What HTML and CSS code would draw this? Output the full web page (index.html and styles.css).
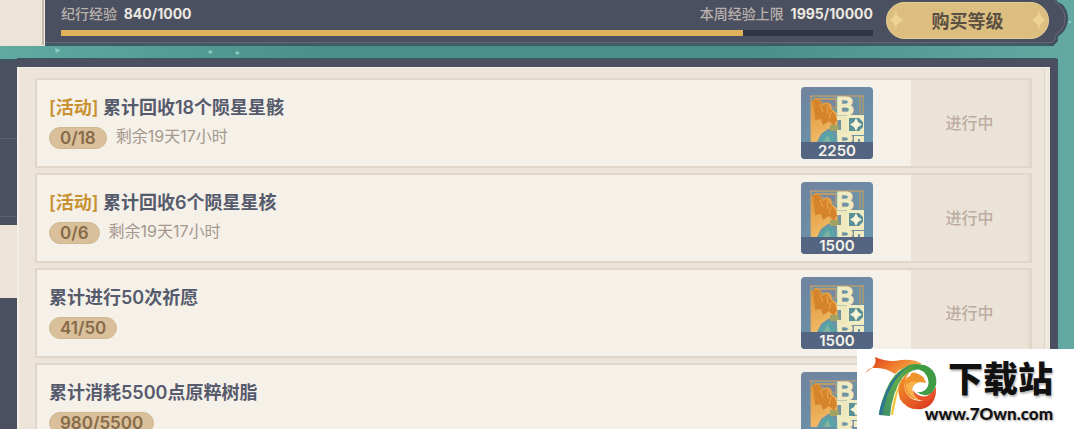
FILE: index.html
```html
<!DOCTYPE html>
<html lang="zh-CN">
<head>
    <meta charset="UTF-8">
    <title>纪行任务</title>
    <link rel="stylesheet" href="styles.css">
</head>
<body>
    <svg class="defs" width="0" height="0" aria-hidden="true">
        <defs>
            <linearGradient id="leaf" x1="0" y1="0" x2="0.3" y2="1">
                <stop offset="0" stop-color="#dd9136"/>
                <stop offset="1" stop-color="#f0bc6a"/>
            </linearGradient>
            <symbol id="bep" viewBox="0 0 72 72">
                <path d="M9 9H63V55H9Z" fill="#6f93a4"/>
                <path d="M13 12H35V22L28 18ZM59 10V27M62 9V27" fill="#7787a0" stroke="#c99a5c" stroke-width="1"/>
                <path d="M9 9H63M10 9V54M14 12H35" fill="none" stroke="#dba258" stroke-width="1"/>
                <path d="M10 15L14 11L18 12L21 17L26 15L30 17L31 22L36 26L37 31L36 40L27 42L20 47L16 55H10Z" fill="url(#leaf)"/>
                <path d="M12 13L18 13L21 19L26 17L29 22L34 27L36 33L33 39L28 34L22 38L20 32L14 33Z" fill="#d5842b"/>
                <path d="M19 18L22 25M26 19L27 27M30 25L28 32M13 34L20 40M13 42L24 40" stroke="#eda94e" stroke-width="1"/>
                <path d="M17 55L23 46L31 44L35 55Z" fill="#58a3a5"/>
                <path d="M22 55L27 48L30 55Z" fill="#7eb3a0"/>
                <path d="M29 38H38V44H29Z" fill="#a1a365"/>
                <path d="M36 29H56V33H46V44H63V48H36V43H40V33H36Z" fill="#eee9bd"/>
                <path d="M46 28H63V47H46Z" fill="#f1ebc2"/>
                <path d="M48 31H58L62 35V40L58 44H48Z" fill="#5b9196"/>
                <path d="M55 31L57 35L61 37.5L57 40L55 44L53 40L49 37.5L53 35Z" fill="#f8f4d8"/>
                <text x="35" y="28" class="art">B</text>
                <text x="35" y="65" class="art">B</text>
                <path d="M53 49H63V55H59V52H57V55H53Z" fill="#f1ebc2"/>
            </symbol>
        </defs>
    </svg>

    <div class="wrap">
        <svg class="stars" width="100%" height="60" aria-hidden="true">
            <path d="M55 48L61 50L56 53ZM210 50L213 52L210 54L208 52ZM237 51L240 53L237 55L235 53Z" fill="#8cc9be"/>
            <circle cx="1070" cy="22" r="1" fill="#a5dcd2"/>
        </svg>

        <div class="top">
            <div class="top-tab"></div>
            <div class="top-bar">
                <div class="exp">
                    <div class="exp-text">
                        <label for="exp">纪行经验 <b>840/1000</b></label>
                        <span>本周经验上限 <b>1995/10000</b></span>
                    </div>
                    <progress id="exp" max="1000" value="840"></progress>
                </div>
                <button class="buy" type="button">
                    <svg width="14" height="24" viewBox="0 0 14 24" aria-hidden="true"><path d="M6 2Q6 8 13 12Q6 16 6 22Q5 15 0 12Q5 9 6 2Z"/></svg>
                    <span>购买等级</span>
                    <svg width="14" height="24" viewBox="0 0 14 24" aria-hidden="true"><path d="M8 2Q8 8 1 12Q8 16 8 22Q9 15 14 12Q9 9 8 2Z"/></svg>
                </button>
            </div>
            <svg class="top-end" width="20" height="46" viewBox="0 0 20 46" aria-hidden="true">
                <path d="M0 0H7Q9 3 13 4Q19 10 19 19Q18 30 11 35Q8 36 9 41L4 46H0Z" fill="#3f4e5f"/>
                <path d="M0 0H5Q7 4 11 6Q16 11 16 19Q16 28 10 32Q5 35 6 40L3 43H0Z" fill="#4b5061"/>
                <path d="M5 0Q7 4 11 6Q16 11 16 19Q16 28 10 32Q5 35 6 40L3 42.5H0" fill="none" stroke="#71677a"/>
            </svg>
        </div>

        <div class="main">
            <div class="side">
                <div class="side-item"></div>
                <div class="side-item"></div>
                <div class="side-space"></div>
                <div class="side-item on"></div>
            </div>
            <ul class="list">
                <li class="task">
                    <div class="info">
                        <h2><em>[活动]</em> 累计回收18个陨星星骸</h2>
                        <p><span class="count">0/18</span><span class="time">剩余19天17小时</span></p>
                    </div>
                    <div class="reward">
                        <svg width="72" height="72" aria-hidden="true"><use href="#bep"/></svg>
                        <span>2250</span>
                    </div>
                    <div class="state">进行中</div>
                </li>
                <li class="task">
                    <div class="info">
                        <h2><em>[活动]</em> 累计回收6个陨星星核</h2>
                        <p><span class="count">0/6</span><span class="time">剩余19天17小时</span></p>
                    </div>
                    <div class="reward">
                        <svg width="72" height="72" aria-hidden="true"><use href="#bep"/></svg>
                        <span>1500</span>
                    </div>
                    <div class="state">进行中</div>
                </li>
                <li class="task">
                    <div class="info">
                        <h2>累计进行50次祈愿</h2>
                        <p><span class="count">41/50</span></p>
                    </div>
                    <div class="reward">
                        <svg width="72" height="72" aria-hidden="true"><use href="#bep"/></svg>
                        <span>1500</span>
                    </div>
                    <div class="state">进行中</div>
                </li>
                <li class="task">
                    <div class="info">
                        <h2>累计消耗5500点原粹树脂</h2>
                        <p><span class="count">980/5500</span></p>
                    </div>
                    <div class="reward">
                        <svg width="72" height="72" aria-hidden="true"><use href="#bep"/></svg>
                    </div>
                    <div class="state"></div>
                </li>
            </ul>
        </div>

        <a class="site" href="#">
            <svg width="84" height="80" viewBox="0 0 84 80" aria-hidden="true">
                <defs>
                    <linearGradient id="flag" x1="0" y1="0" x2="1" y2="0.4">
                        <stop offset="0" stop-color="#d8341c"/>
                        <stop offset="0.6" stop-color="#ef7a2c"/>
                        <stop offset="1" stop-color="#f6b04a"/>
                    </linearGradient>
                    <linearGradient id="stem" x1="1" y1="0" x2="0" y2="1">
                        <stop offset="0" stop-color="#4a9a3c"/>
                        <stop offset="0.5" stop-color="#5eaa4c"/>
                        <stop offset="1" stop-color="#3c8c6a"/>
                    </linearGradient>
                    <linearGradient id="swirl" x1="0" y1="0" x2="1" y2="1">
                        <stop offset="0" stop-color="#f59a2a"/>
                        <stop offset="1" stop-color="#d9301c"/>
                    </linearGradient>
                </defs>
                <path d="M18 8Q32 14 44 11Q58 10 65 15Q46 16 38 25Q28 18 18 19Q13 18 8 24L15 19Q20 14 18 8Z" fill="url(#flag)"/>
                <path d="M72 20Q63 13 52 16Q36 23 29 41Q23 55 22 66L33 67Q35 43 46 28Q56 18 72 20Z" fill="url(#stem)"/>
                <path d="M55 16Q34 25 27 49Q22 60 22 66L25 66Q29 44 39 30Q47 20 55 16Z" fill="#2c7496"/>
                <path d="M34 66Q36 47 43 34Q39 50 36 66Z" fill="#f3c83c"/>
                <path d="M57 16Q72 13 78 25Q82 36 75 44Q67 49 60 43Q68 44 71 37Q73 30 67 23Q61 19 54 20Z" fill="#3f9c45"/>
                <path d="M53 23Q46 30 48 41Q51 51 63 52Q74 51 79 42Q78 57 65 60Q50 62 43 50Q37 33 53 23Z" fill="url(#swirl)"/>
                <path d="M48 39Q46 29 53 27Q54 22 59 24Q67 26 69 34L63 33Q56 34 55 41Q56 48 64 51Q50 51 48 39Z" fill="#f0952e"/>
                <path d="M56 41Q61 49 70 47Q76 44 79 38Q80 50 68 52Q57 52 56 41Z" fill="#e8502a"/>
                <path d="M49 36Q51 49 65 52Q56 48 55 40Q55 35 62 33Q53 31 49 36Z" fill="#f7b24c"/>
            </svg>
            <span class="site-text">
                <strong>下载站</strong>
                <span>www.7Own.com</span>
            </span>
        </a>
    </div>
</body>
</html>
```
FILE: styles.css
```css
*{
    margin: 0;
    padding: 0;
    box-sizing: border-box;
    list-style-type: none;
}
body{
    font-family: Inter, "Noto Sans CJK SC", sans-serif;
    color: #4c5165;
}
.defs{
    position: absolute;
}
.wrap{
    position: relative;
    display: flex;
    flex-direction: column;
    height: 100vh;
    overflow: hidden;
    background: linear-gradient(90deg, #60aaa2 0, #4b8f8b 30%, #4b8f8b 70%, #63a9a2 100%);
}
.stars{
    position: absolute;
    top: 0;
    left: 0;
}

/* 顶部经验条 */
.top{
    position: relative;
    display: flex;
    flex: none;
    height: 46px;
    padding-right: 5px;
}
.top-tab{
    width: 45px;
    background-color: #ece4d8;
    border-right: 1px solid #f3ede1;
    border-bottom: 1px solid #e8e2cf;
    box-shadow: inset -2px 0 #bfb8a9;
}
.top-bar{
    display: flex;
    flex: 1;
    gap: 13px;
    padding: 2px 0 0 16px;
    background-color: #4b5061;
    border-bottom: 3px solid #3f5a69;
    box-shadow: inset 0 -1px #696577;
}
.exp{
    flex: 1;
    padding-top: 2px;
}
.exp-text{
    display: flex;
    justify-content: space-between;
    height: 26px;
    font-size: 14px;
    font-weight: 500;
    line-height: 20px;
    color: #b9b1ab;
}
.exp-text b{
    margin-left: 3px;
    font-weight: 700;
    color: #ece7e0;
}
progress{
    display: block;
    width: 100%;
    height: 6px;
    border: 0;
    appearance: none;
    background-color: #2e3347;
}
progress::-webkit-progress-bar{
    background-color: #2e3347;
}
progress::-webkit-progress-value{
    background-color: #dfb35a;
}
.buy{
    display: flex;
    align-items: center;
    justify-content: space-between;
    width: 163px;
    height: 37px;
    padding: 0 3px 2px;
    border: 1px solid #e5ce98;
    border-radius: 19px;
    background-color: #dcbf80;
    font: 600 18px Inter, "Noto Sans CJK SC", sans-serif;
    color: #5a5044;
}
.buy path{
    fill: #ecd394;
}

/* 任务面板 */
.main{
    position: relative;
    display: flex;
    flex: 1;
    min-height: 0;
    margin: 13px 17px 0 0;
}
.side{
    width: 17px;
    background-color: #4b5061;
    border-top: 2px solid #3f5566;
}
.side-item{
    height: 78px;
    border-bottom: 1px solid #5d6070;
}
.side-space{
    height: 8px;
}
.side-item.on{
    height: 73px;
    border: 0;
    background-color: #ece4d8;
}
.list{
    flex: 1;
    padding: 11px 18px 0;
    border: solid #4b5061;
    border-width: 8px 7px 0 0;
    background-color: #ece4d8;
    box-shadow: inset 2px 1px #f3eee6, inset -5px 0 #eee8df, inset -6px 0 #ded5c9, 0 -1px #3f5566, 1px 0 #3f5566;
}
.task{
    display: flex;
    height: 90px;
    margin-bottom: 5px;
    border: 2px solid #e0d7ca;
    background-color: #f5f0e8;
}
.info{
    flex: 1;
    padding: 16px 0 0 12px;
}
.info h2{
    margin-bottom: 7px;
    font-size: 18px;
    font-weight: 600;
    line-height: 24px;
    color: #555a6c;
}
.info em{
    font-style: normal;
    color: #c89232;
}
.info p{
    display: flex;
    gap: 9px;
}
.count{
    height: 22px;
    padding: 0 10px;
    border: 1px solid #cdb890;
    border-radius: 11px;
    background-color: #d9c09a;
    font-size: 17px;
    font-weight: 600;
    line-height: 20px;
    color: #866a49;
}
.time{
    font-size: 16px;
    line-height: 18px;
    color: #a5988c;
}
.reward{
    position: relative;
    width: 72px;
    height: 72px;
    margin: 7px 38px 0 0;
    overflow: hidden;
    border-radius: 4px;
    background: linear-gradient(150deg, #71839f, #6798ae);
}
.reward svg{
    display: block;
}
.reward span{
    position: absolute;
    left: 0;
    bottom: 0;
    width: 100%;
    height: 17px;
    background-color: #536581;
    font-size: 15px;
    font-weight: 600;
    line-height: 17px;
    text-align: center;
    color: #f5f2ea;
}
.art{
    font: bold 25px "Liberation Sans", sans-serif;
    fill: #f1ebc2;
    stroke: #f1ebc2;
    stroke-width: 1px;
}
.state{
    width: 119px;
    border-right: 2px solid #e4dbcf;
    background-color: #ebe3d7;
    font-size: 16px;
    font-weight: 500;
    line-height: 86px;
    text-align: center;
    color: #bcaca2;
}

/* 右下角站标 */
.site{
    position: absolute;
    right: 0;
    bottom: 0;
    display: flex;
    width: 217px;
    height: 80px;
    background-color: #fff;
    text-decoration: none;
    color: #111;
}
.site-text{
    display: flex;
    flex-direction: column;
    align-items: flex-end;
    width: 112px;
    padding-top: 9px;
    white-space: nowrap;
}
.site strong{
    font-size: 35px;
    font-weight: 900;
    line-height: 42px;
    text-shadow: 1px 2px 2px #bbb;
}
.site-text span{
    font: 900 17px/28px Lato, sans-serif;
    text-shadow: 1px 1px 2px #aaa;
}
```
